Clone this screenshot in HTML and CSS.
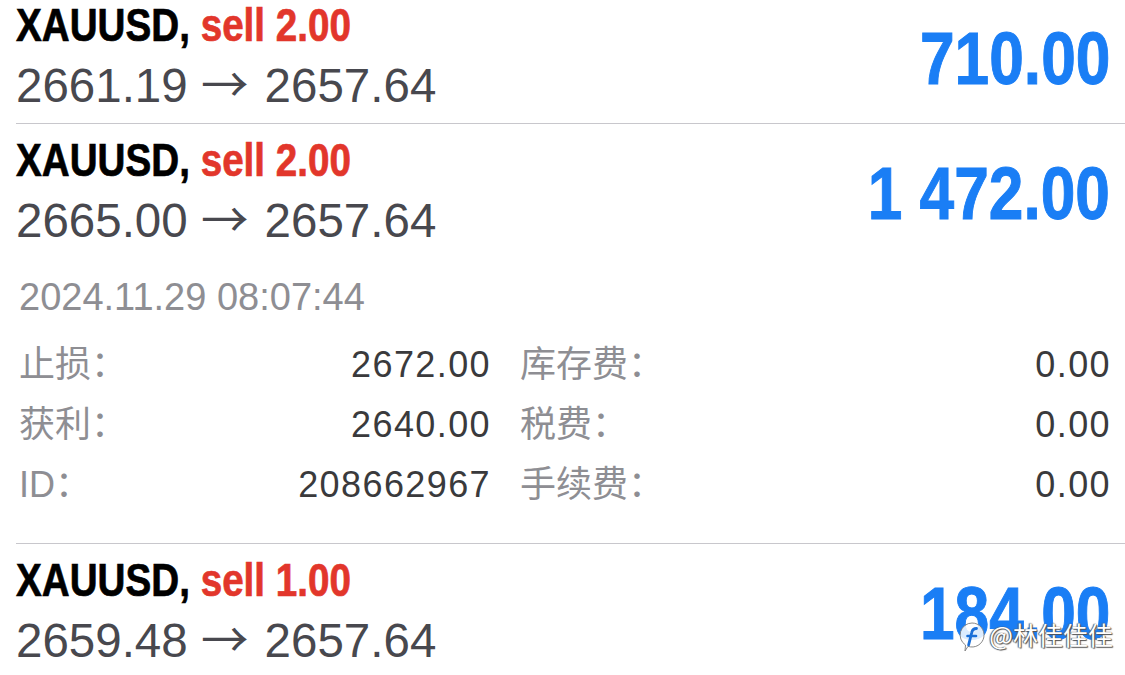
FILE: index.html
```html
<!DOCTYPE html>
<html lang="zh-CN">
<head>
<meta charset="utf-8">
<title>Positions</title>
<link rel="stylesheet" href="styles.css">
</head>
<body>
<div class="list">
  <section class="card card-first">
    <div class="row">
      <div class="info">
        <div class="title"><span class="sym">XAUUSD,</span> <span class="side">sell 2.00</span></div>
        <div class="price">2661.19 <span class="arrow">→</span> 2657.64</div>
      </div>
      <div class="profit">710.00</div>
    </div>
  </section>
  <section class="card">
    <div class="row">
      <div class="info">
        <div class="title"><span class="sym">XAUUSD,</span> <span class="side">sell 2.00</span></div>
        <div class="price">2665.00 <span class="arrow">→</span> 2657.64</div>
      </div>
      <div class="profit">1 472.00</div>
    </div>
    <div class="details">
      <div class="date">2024.11.29 08:07:44</div>
      <div class="grid">
        <div class="pair"><span class="label">止损<span class="colon">：</span></span><span class="value">2672.00</span></div>
        <div class="pair"><span class="label">库存费<span class="colon">：</span></span><span class="value">0.00</span></div>
        <div class="pair"><span class="label">获利<span class="colon">：</span></span><span class="value">2640.00</span></div>
        <div class="pair"><span class="label">税费<span class="colon">：</span></span><span class="value">0.00</span></div>
        <div class="pair"><span class="label">ID<span class="colon">：</span></span><span class="value">208662967</span></div>
        <div class="pair"><span class="label">手续费<span class="colon">：</span></span><span class="value">0.00</span></div>
      </div>
    </div>
  </section>
  <section class="card card-last">
    <div class="row">
      <div class="info">
        <div class="title"><span class="sym">XAUUSD,</span> <span class="side">sell 1.00</span></div>
        <div class="price">2659.48 <span class="arrow">→</span> 2657.64</div>
      </div>
      <div class="profit">184.00</div>
    </div>
  </section>
  <div class="watermark">
    <svg class="wm-logo" width="30" height="34" viewBox="0 0 30 34">
      <path d="M15 3 A12 12 0 1 1 11 26.3 L8 31 L8.5 25 A12 12 0 0 1 15 3 Z" fill="#ffffff" fill-opacity="0.85" stroke="#7a7a7a" stroke-width="0.9"/>
      <path d="M19.5 8.5 C16.5 8.5 15.3 10 14.8 12.3 L11.6 25" fill="none" stroke="#1a6fd8" stroke-width="2.8" stroke-linecap="round"/>
      <path d="M10.5 16 H19" fill="none" stroke="#1a6fd8" stroke-width="2.6" stroke-linecap="round"/>
    </svg>
    <span class="wm-text">@林佳佳佳</span>
  </div>
</div>
</body>
</html>
```
FILE: styles.css
```css
html, body {
  margin: 0;
  padding: 0;
  background: #ffffff;
}

body {
  font-family: "Liberation Sans", "Noto Sans CJK SC", sans-serif;
  overflow: hidden;
}

.list {
  position: relative;
  width: 1125px;
  height: 675px;
  overflow: hidden;
}

.card {
  margin-left: 16px;
  padding: 11px 15px 1px 0;
  border-bottom: 1px solid #c8c7cc;
}

.card-first {
  padding-top: 0;
}

.card-last {
  border-bottom: none;
}

.row {
  display: flex;
  justify-content: space-between;
  align-items: center;
}

.title {
  font-family: "Liberation Sans", sans-serif;
  font-weight: 700;
  font-size: 46px;
  line-height: 50px;
  white-space: nowrap;
  transform: scaleX(0.84);
  transform-origin: left center;
}

.sym {
  color: #000000;
  -webkit-text-stroke: 0.7px #000000;
}

.side {
  color: #e2362b;
  -webkit-text-stroke: 0.7px #e2362b;
}

.price {
  font-size: 47.5px;
  line-height: 72px;
  color: #48484e;
  white-space: nowrap;
}

.arrow {
  font-family: "Noto Sans CJK JP", sans-serif;
  font-weight: 400;
  line-height: 0;
  margin: 0 3px 0 0;
}

.profit {
  font-family: "Liberation Sans", sans-serif;
  font-weight: 700;
  font-size: 75px;
  color: #1a7ef5;
  margin-bottom: 6px;
  white-space: nowrap;
  transform: scaleX(0.83);
  transform-origin: right center;
  -webkit-text-stroke: 1px #1a7ef5;
}

.details {
  padding-left: 3px;
  padding-bottom: 27px;
}

.date {
  margin-top: 20px;
  font-size: 38px;
  line-height: 40px;
  color: #8e8e93;
}

.grid {
  display: grid;
  grid-template-columns: 471px 1fr;
  column-gap: 30px;
  margin-top: 18px;
}

.pair {
  display: flex;
  justify-content: space-between;
  align-items: baseline;
  height: 60px;
  font-size: 36px;
  line-height: 60px;
}

.label {
  color: #8e8e93;
}

.colon {
  font-family: "Noto Sans CJK TC", sans-serif;
  line-height: 0;
}

.value {
  color: #3a3a3c;
  letter-spacing: 1.4px;
  margin-right: -1px;
}

.watermark {
  position: absolute;
  right: 12px;
  top: 614px;
  display: flex;
  align-items: center;
  gap: 2px;
}

.wm-logo {
  margin-top: 6px;
}

.wm-text {
  font-family: "Noto Sans CJK SC", sans-serif;
  font-size: 25px;
  line-height: 32px;
  color: #ffffff;
  text-shadow: 0 0 1px #444, 1px 1px 1px #555, -1px 0 1px #666;
}
```
